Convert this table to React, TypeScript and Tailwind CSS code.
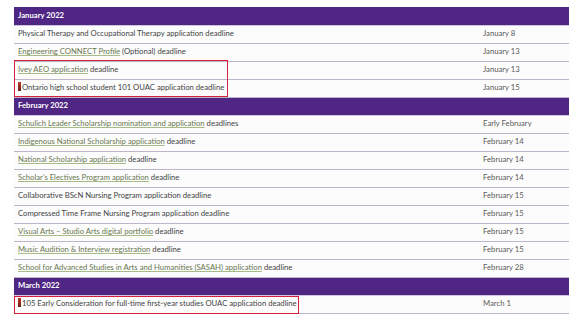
type Item = { pre?: string; link?: string; post?: string; date: string; marker?: boolean }
type Section = { month: string; items: Item[] }

const sections: Section[] = [
  {
    month: 'January 2022',
    items: [
      { pre: 'Physical Therapy and Occupational Therapy application deadline', date: 'January 8' },
      { link: 'Engineering CONNECT Profile', post: ' (Optional) deadline', date: 'January 13' },
      { link: 'Ivey AEO application', post: ' deadline', date: 'January 13' },
      { pre: 'Ontario high school student 101 OUAC application deadline', date: 'January 15', marker: true },
    ],
  },
  {
    month: 'February 2022',
    items: [
      { link: 'Schulich Leader Scholarship nomination and application', post: ' deadlines', date: 'Early February' },
      { link: 'Indigenous National Scholarship application', post: ' deadline', date: 'February 14' },
      { link: 'National Scholarship application', post: ' deadline', date: 'February 14' },
      { link: "Scholar's Electives Program application", post: ' deadline', date: 'February 14' },
      { pre: 'Collaborative BScN Nursing Program application deadline', date: 'February 15' },
      { pre: 'Compressed Time Frame Nursing Program application deadline', date: 'February 15' },
      { link: 'Visual Arts – Studio Arts digital portfolio', post: ' deadline', date: 'February 15' },
      { link: 'Music Audition & Interview registration', post: ' deadline', date: 'February 15' },
      { link: 'School for Advanced Studies in Arts and Humanities (SASAH) application', post: ' deadline', date: 'February 28' },
    ],
  },
  {
    month: 'March 2022',
    items: [
      { pre: '105 Early Consideration for full-time first-year studies OUAC application deadline', date: 'March 1', marker: true },
    ],
  },
]

function Row({ item }: { item: Item }) {
  return (
    <tr className="h-[18px] bg-[#fcfcfc] border-b border-[#bdb5cc]">
      <td className="pl-[4px] align-middle whitespace-nowrap">
        {item.marker && (
          <span className="inline-block w-[3px] h-[9px] mr-[1px] align-[-1px] bg-gradient-to-b from-[#c0392b] to-[#6b1d12]" />
        )}
        {item.pre}
        {item.link && (
          <a className="text-[#68774f] underline decoration-[#a6bb86] underline-offset-1">{item.link}</a>
        )}
        {item.post}
      </td>
      <td className="pl-[4px] align-middle whitespace-nowrap text-[#595959]">{item.date}</td>
    </tr>
  )
}

export default function App() {
  return (
    <div className="w-[579px] h-[328px] bg-white pt-[7px] pl-[14px] font-['Lato','Liberation_Sans',sans-serif] text-[7.7px] text-[#444444]">
      <div className="relative w-[555px]">
        <table className="w-full border-collapse">
          <colgroup>
            <col className="w-[465px]" />
            <col />
          </colgroup>
          <tbody>
            {sections.map((s) => (
              <>
                <tr key={s.month} className="h-[18px] bg-[#4f2683] border-b border-[#cfc6dc]">
                  <td colSpan={2} className="pl-[4px] text-white font-bold align-middle">{s.month}</td>
                </tr>
                {s.items.map((it, i) => (
                  <Row key={s.month + i} item={it} />
                ))}
              </>
            ))}
          </tbody>
        </table>
        {/* highlight boxes */}
        <div className="absolute left-0 top-[53px] w-[214px] h-[37px] border-[1.5px] border-[#d4203a] pointer-events-none" />
        <div className="absolute left-0 top-[289px] w-[285px] h-[18px] border-[1.5px] border-[#d4203a] pointer-events-none" />
      </div>
    </div>
  )
}
